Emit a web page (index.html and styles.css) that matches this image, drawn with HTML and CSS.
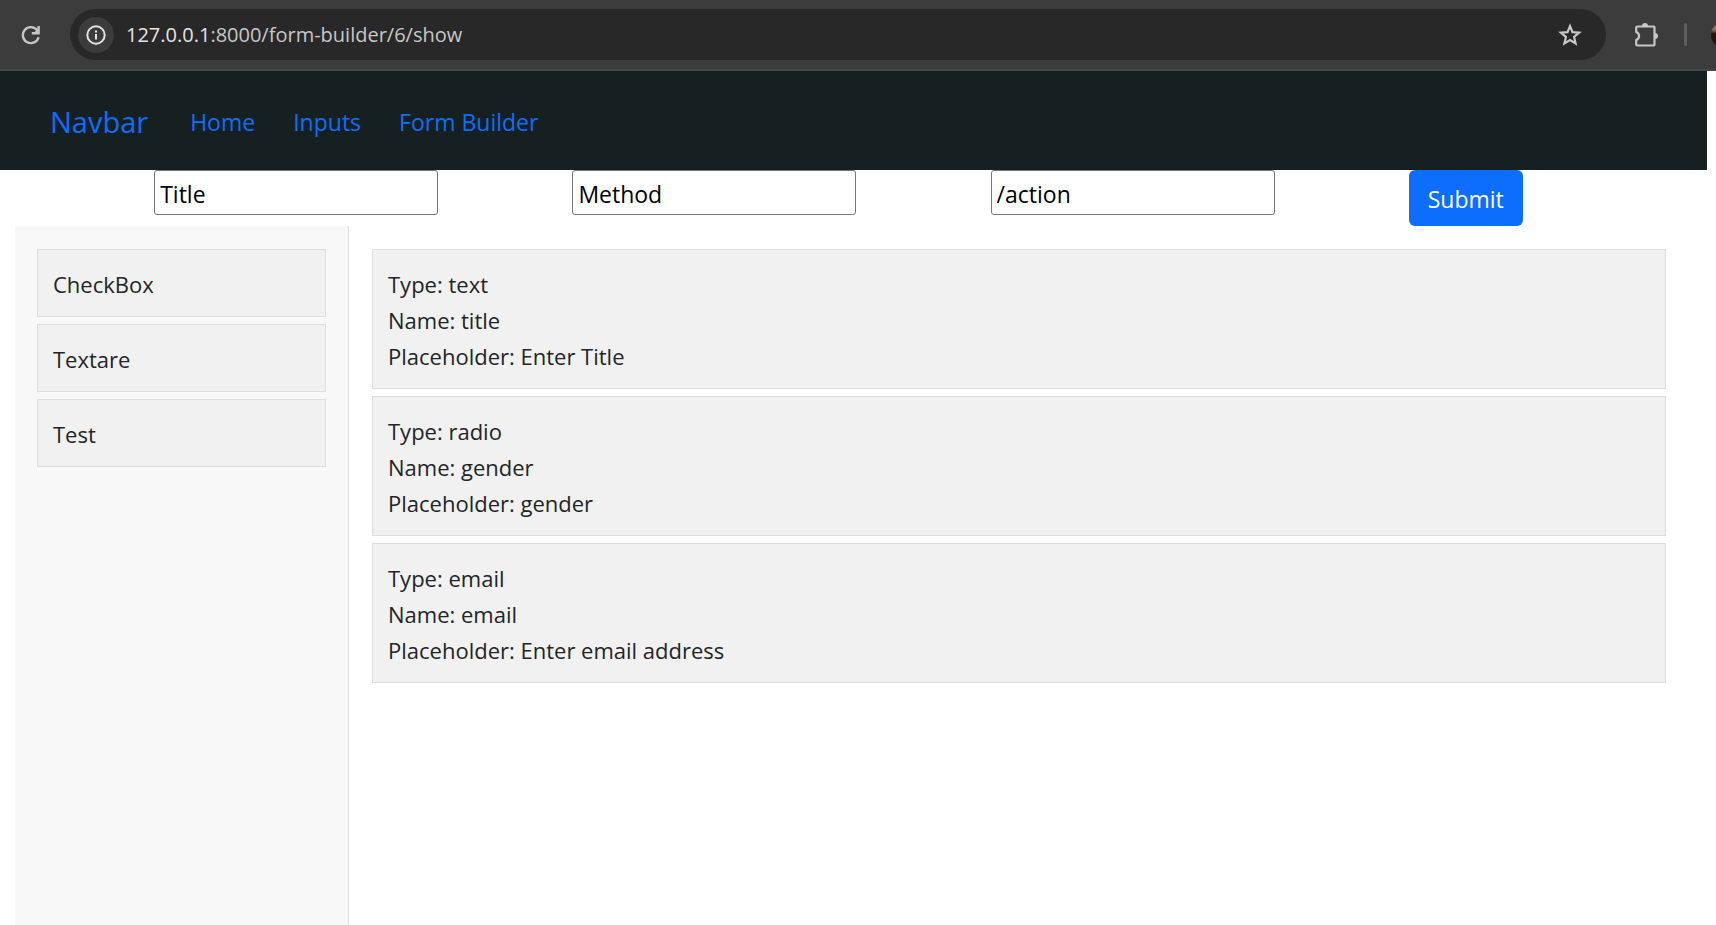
FILE: index.html
```
<!DOCTYPE html>
<html lang="en">
<head>
<meta charset="utf-8">
<title>Form Builder</title>
<link rel="stylesheet" href="styles.css">
</head>
<body>
<header class="browser-bar">
  <button class="icon-button reload" type="button" aria-label="Reload">
    <svg width="20" height="20" viewBox="0 0 20 20" fill="none" stroke="#c7c7c7" stroke-width="2.4"><path d="M16.2 5.2A8 8 0 1 0 17.6 12.2"/><path d="M17.6 1v7.2H10.8"/><path d="M12.5 8.2L17.6 8.2V3.2Z" fill="#c7c7c7" stroke="none"/></svg>
  </button>
  <div class="address">
    <button class="icon-button info" type="button" aria-label="Site information">
      <svg width="20" height="20" viewBox="0 0 20 20" fill="none" stroke="#e3e3e3" stroke-width="2"><circle cx="10" cy="10" r="8.7"/><path d="M10 9v5.6M10 5.4v2"/></svg>
    </button>
    <span class="url"><span class="host">127.0.0.1</span>:8000/form-builder/6/show</span>
    <button class="icon-button" type="button" aria-label="Bookmark this page">
      <svg width="24" height="24" viewBox="0 0 24 24" fill="none" stroke="#c7c7c7" stroke-width="2.2"><path d="M12 3.2l2.5 6 6.6.5-5 4.3 1.5 6.4-5.6-3.4-5.6 3.4 1.5-6.4-5-4.3 6.6-.5z"/></svg>
    </button>
  </div>
  <button class="icon-button extensions" type="button" aria-label="Extensions">
    <svg width="26" height="26" viewBox="0 0 26 26" fill="none" stroke="#c7c7c7" stroke-width="2.2" stroke-linejoin="round"><path d="M4.500 4.500H20.500Q21.500 4.500 21.500 5.500V22.500Q21.500 23.500 20.500 23.500H4.500Q3.200 23.500 3.200 22.500V18C7 16.500 7 11.500 3.200 10V5.500Q3.200 4.500 4.500 4.500Z"/><path d="M9 4a3 3 0 0 1 6 0zM22 11a3 3 0 0 1 0 6z" fill="#c7c7c7" stroke="none"/></svg>
  </button>
  <span class="divider"></span>
  <span class="avatar-clip"><span class="avatar"></span></span>
</header>
<div class="page">
  <nav class="navbar">
    <a class="brand" href="#">Navbar</a>
    <a class="nav-link" href="#">Home</a>
    <a class="nav-link" href="#">Inputs</a>
    <a class="nav-link" href="#">Form Builder</a>
  </nav>
  <form class="form-row">
    <input class="field" type="text" aria-label="Title" value="Title">
    <input class="field" type="text" aria-label="Method" value="Method">
    <input class="field" type="text" aria-label="Action" value="/action">
    <button class="submit" type="button">Submit</button>
  </form>
  <div class="builder">
    <aside class="sidebar">
      <div class="card">CheckBox</div>
      <div class="card">Textare</div>
      <div class="card">Test</div>
    </aside>
    <main class="canvas">
      <div class="card"><div>Type: text</div><div>Name: title</div><div>Placeholder: Enter Title</div></div>
      <div class="card"><div>Type: radio</div><div>Name: gender</div><div>Placeholder: gender</div></div>
      <div class="card"><div>Type: email</div><div>Name: email</div><div>Placeholder: Enter email address</div></div>
    </main>
  </div>
</div>
</body>
</html>
```
FILE: styles.css
```
* { box-sizing: border-box; }
body {
  margin: 0;
  min-height: 100vh;
  display: flex;
  flex-direction: column;
  overflow-x: hidden;
  background: #fff;
  color: #212529;
  font: 23px/36px "Open Sans", "Noto Sans", sans-serif;
}
a { color: #0d6efd; text-decoration: none; }
.browser-bar {
  display: flex;
  align-items: center;
  height: 71px;
  padding: 0 0 0 21px;
  background: #3c3c3c;
  border-bottom: 2px solid #474747;
}
.icon-button {
  display: flex;
  align-items: center;
  justify-content: center;
  flex: none;
  padding: 0;
  border: 0;
  background: none;
}
.address {
  display: flex;
  align-items: center;
  flex: 1;
  height: 51px;
  margin-left: 29px;
  padding: 0 24px 0 8px;
  border-radius: 26px;
  background: #282828;
}
.info {
  width: 36px;
  height: 36px;
  border-radius: 50%;
  background: #3c3c3c;
}
.url { flex: 1; margin-left: 12px; color: #c7c7c7; font-size: 20px; }
.host { color: #e3e3e3; }
.extensions { margin-left: 27px; }
.divider { width: 3px; height: 23px; margin-left: 25px; border-radius: 2px; background: #5e5e5e; }
.avatar-clip { width: 5px; height: 26px; margin-left: 24px; overflow: hidden; }
.avatar { display: block; width: 26px; height: 26px; border-radius: 50%; background: linear-gradient(#86736a 30%, #21150f 45%); }
.page { display: flex; flex-direction: column; flex: 1; margin-right: 9px; }
.navbar {
  display: flex;
  align-items: center;
  height: 99px;
  padding: 2px 50px 0;
  background: #162020;
}
.brand { margin-right: 23px; font-size: 29px; }
.nav-link { padding: 0 19px; }
.form-row {
  display: flex;
  align-items: flex-start;
  justify-content: space-evenly;
  padding: 0 50px 0 20px;
}
.field {
  width: 284px;
  height: 45px;
  padding: 3px 5px 1px;
  border: 1px solid #767676;
  border-radius: 3px;
  background: #fff;
  color: #000;
  font: inherit;
}
.submit {
  width: 114px;
  padding: 11px 0 9px;
  border: 0;
  border-radius: 6px;
  background: #0d6efd;
  color: #fff;
  font: inherit;
}
.builder { display: flex; flex: 1; padding: 0 22px 0 15px; }
.sidebar, .canvas { display: flex; flex-direction: column; gap: 7px; padding: 23px 19px 23px 23px; }
.sidebar { width: 20%; padding: 23px 22px; background: #f8f8f8; border-right: 1px solid #ddd; }
.canvas { flex: 1; }
.card { padding: 16px 15px 14px; border: 1px solid #ddd; background: #f1f1f1; font-size: 22px; }
```
